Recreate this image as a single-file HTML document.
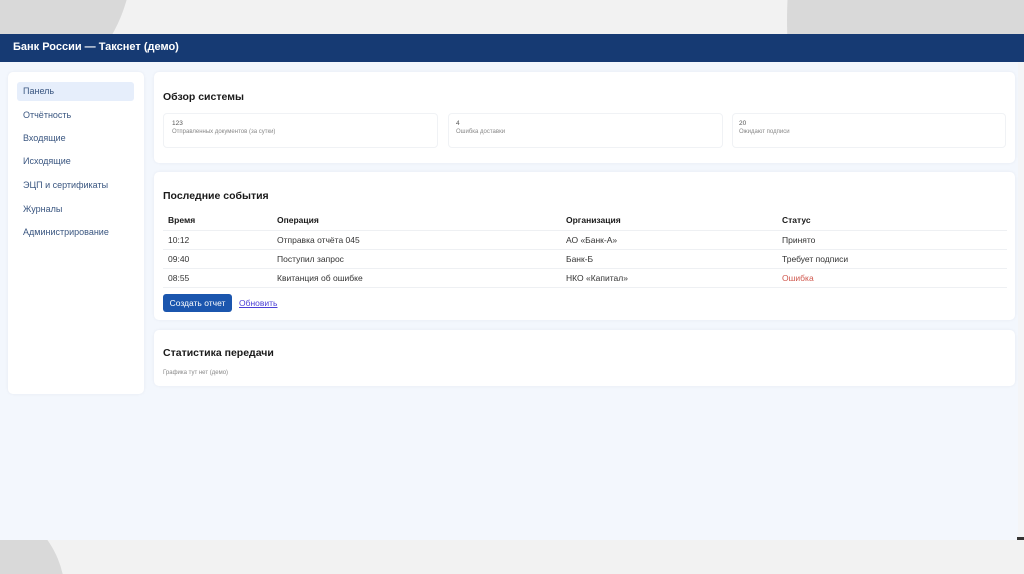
<!DOCTYPE html>
<html><head><meta charset="utf-8"><style>
*{margin:0;padding:0;box-sizing:border-box}
html,body{width:1024px;height:574px;overflow:hidden}
body{background:#f2f2f2;font-family:"Liberation Sans","Noto Sans CJK SC",sans-serif;color:#222}
#w{position:relative;width:1024px;height:574px;overflow:hidden;background:#f2f2f2}
.a{position:absolute;white-space:nowrap}
.hdr{left:0;top:34px;width:1024px;height:28px;background:#163a73}
.main{left:0;top:62px;width:1018px;height:478px;background:#f3f7fd}
.card{position:absolute;background:#fff;border-radius:5px;box-shadow:0 0 3px rgba(0,20,60,.06)}
.nav{font-size:9px;color:#3a5680;left:23px}
.h{font-size:10.5px;font-weight:bold;color:#1a1a1a}
.stat{position:absolute;top:113px;height:35px;border:1px solid #f0f2f5;border-radius:4px;background:#fff}
.sn{font-size:6.5px;color:#555}
.sl{font-size:6px;color:#888}
.th{font-size:8.5px;font-weight:bold;color:#1a1a1a}
.td{font-size:8.5px;color:#333}
.ln{position:absolute;left:163px;width:844px;height:1px;background:#eef0f3}
</style></head><body><div id="w">
<svg class="a" style="left:0;top:0" width="1024" height="574" viewBox="0 0 1024 574">
<circle cx="-18" cy="-40" r="150" fill="#d9d9d9"/>
<circle cx="1187" cy="20" r="400" fill="#d9d9d9"/>
<circle cx="-30" cy="595" r="95" fill="#d9d9d9"/>
</svg>
<div class="a hdr"></div>
<div class="a" style="left:13px;top:41px;font-size:11px;font-weight:bold;color:#fff">Банк России — Такснет (демо)</div>
<div class="a main"></div>
<div class="a" style="left:1018px;top:62px;width:6px;height:478px;background:#f4f5f7"></div>
<div class="a" style="left:1017px;top:537px;width:7px;height:3px;background:#333"></div>

<div class="card" style="left:8px;top:72px;width:136px;height:322px"></div>
<div class="a" style="left:17px;top:82px;width:117px;height:19px;background:#e6eefb;border-radius:3px"></div>
<div class="a nav" style="top:86px">Панель</div>
<div class="a nav" style="top:110px">Отчётность</div>
<div class="a nav" style="top:133px">Входящие</div>
<div class="a nav" style="top:156px">Исходящие</div>
<div class="a nav" style="top:180px">ЭЦП и сертификаты</div>
<div class="a nav" style="top:204px">Журналы</div>
<div class="a nav" style="top:227px">Администрирование</div>

<div class="card" style="left:154px;top:72px;width:861px;height:91px"></div>
<div class="a h" style="left:163px;top:91px">Обзор системы</div>
<div class="stat" style="left:163px;width:275px"></div>
<div class="stat" style="left:448px;width:275px"></div>
<div class="stat" style="left:732px;width:274px"></div>
<div class="a sn" style="left:172px;top:120px">123</div>
<div class="a sl" style="left:172px;top:129px">Отправленных документов (за сутки)</div>
<div class="a sn" style="left:456px;top:120px">4</div>
<div class="a sl" style="left:456px;top:129px">Ошибка доставки</div>
<div class="a sn" style="left:739px;top:120px">20</div>
<div class="a sl" style="left:739px;top:129px">Ожидают подписи</div>

<div class="card" style="left:154px;top:172px;width:861px;height:148px"></div>
<div class="a h" style="left:163px;top:190px">Последние события</div>
<div class="a th" style="left:168px;top:215px">Время</div>
<div class="a th" style="left:277px;top:215px">Операция</div>
<div class="a th" style="left:566px;top:215px">Организация</div>
<div class="a th" style="left:782px;top:215px">Статус</div>
<div class="ln" style="top:230px"></div>
<div class="a td" style="left:168px;top:235px">10:12</div>
<div class="a td" style="left:277px;top:235px">Отправка отчёта 045</div>
<div class="a td" style="left:566px;top:235px">АО «Банк-А»</div>
<div class="a td" style="left:782px;top:235px">Принято</div>
<div class="ln" style="top:249px"></div>
<div class="a td" style="left:168px;top:254px">09:40</div>
<div class="a td" style="left:277px;top:254px">Поступил запрос</div>
<div class="a td" style="left:566px;top:254px">Банк-Б</div>
<div class="a td" style="left:782px;top:254px">Требует подписи</div>
<div class="ln" style="top:268px"></div>
<div class="a td" style="left:168px;top:273px">08:55</div>
<div class="a td" style="left:277px;top:273px">Квитанция об ошибке</div>
<div class="a td" style="left:566px;top:273px">НКО «Капитал»</div>
<div class="a td" style="left:782px;top:273px;color:#d0584e">Ошибка</div>
<div class="ln" style="top:287px"></div>
<div class="a" style="left:163px;top:294px;width:69px;height:18px;background:#1b56ae;border-radius:3px;color:#fff;font-size:8.5px;text-align:center;line-height:18px">Создать отчет</div>
<div class="a" style="left:239px;top:298px;font-size:8.5px;color:#4a3fd6;text-decoration:underline">Обновить</div>

<div class="card" style="left:154px;top:330px;width:861px;height:56px"></div>
<div class="a h" style="left:163px;top:347px">Статистика передачи</div>
<div class="a sl" style="left:163px;top:370px">Графика тут нет (демо)</div>
</div></body></html>
